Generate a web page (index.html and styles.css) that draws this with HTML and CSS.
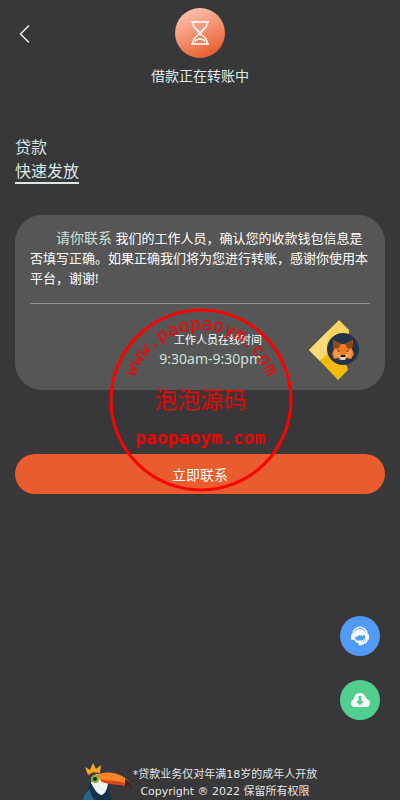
FILE: index.html
```html
<!DOCTYPE html>
<html lang="zh-CN">
<head>
    <meta charset="UTF-8">
    <meta name="viewport" content="width=device-width, initial-scale=1.0">
    <title>贷款</title>
    <link rel="stylesheet" href="styles.css">
</head>
<body>
    <header class="header">
        <button class="back-button" type="button" aria-label="返回">
            <svg width="12" height="20" viewBox="0 0 12 20"><path d="M10 1.500 1.500 10l8.500 8.500" fill="none" stroke="#eee" stroke-width="1.500"/></svg>
        </button>
        <div class="status-icon">
            <svg width="20" height="26" viewBox="0 0 20 26" fill="none" stroke="#fff" stroke-width="1.300">
                <path d="M1 2h18M1 24h18M3 2v2c0 5 6 6.500 6 9s-6 4-6 9v2M17 2v2c0 5-6 6.500-6 9s6 4 6 9v2"/>
                <path d="M5.500 7.500c2 3 3.500 3.500 4.500 5.500 1-2 2.500-2.500 4.500-5.500M10 14v2M5 22c1-4 9-4 10 0"/>
            </svg>
        </div>
        <p class="status-text">借款正在转账中</p>
    </header>

    <main class="content">
        <h1 class="title">贷款<br><span class="title-active">快速发放</span></h1>

        <section class="card">
            <p class="notice"><span class="notice-lead">请你联系</span> 我们的工作人员，确认您的收款钱包信息是否填写正确。如果正确我们将为您进行转账，感谢你使用本平台，谢谢!</p>
            <div class="service">
                <div class="service-time">
                    <p class="service-label">工作人员在线时间</p>
                    <p class="service-hours">9:30am-9:30pm</p>
                </div>
                <svg class="wallet-logo" width="50" height="60" viewBox="0 0 50 60">
                    <path d="M0 30 30 0l10 10v3L22 33 11 41z" fill="#f8d35e"/>
                    <path d="M0 30 20 10l-3 21-6 10z" fill="#fadb75"/>
                    <path d="m11 41 10-9 17 14 1 4-10 10z" fill="#f4b90b"/>
                    <circle cx="34" cy="29" r="16" fill="#23344a"/>
                    <path d="m24 20 8 4h4l8-4-1 9 2 5-3 5-5-1-2 2h-4l-2-2-4 1-2-5 2-5z" fill="#ef7b22"/>
                    <path d="m24 20 8 4-3 5-5-1zM44 20l-8 4 3 5 4-1z" fill="#944719"/>
                    <path d="m25 30 5 1 2 5-6 2zM43 30l-5 1-2 5 6 2z" fill="#f99b4c"/>
                    <path d="m28 30 3 1-1 1zM40 30l-3 1 1 1z" fill="#26323c"/>
                    <path d="m30 36 2-1h4l2 1-2 4h-4z" fill="#e5d9cd"/>
                    <path d="M32 35h4l1 2h-6z" fill="#222"/>
                </svg>
            </div>
        </section>

        <button class="contact-button" type="button">立即联系</button>
    </main>

    <footer class="footer">
        <svg class="toucan" width="50" height="37" viewBox="0 0 50 37">
            <path d="M0 37c0-5 3-9 6-12 1-9 5-13 11-14 7 1 9 7 9 14 0 6 0 8 5 12z" fill="#15304d"/>
            <path d="M0 37c1-6 4-9 7-11 0 5 2 8 5 11z" fill="#286386"/>
            <path d="M10 13c5-4 13-2 15 6 0 6-3 13-7 13-5-2-7-7-10-12z" fill="#eef4ee"/>
            <path d="M13 12c10-5 30-3 37 13-8-7-16-3-31-6z" fill="#f78523"/>
            <path d="M17 16c11 3 24 0 33 9-9-4-20-2-31-6z" fill="#d6461b"/>
            <path d="M42 16c4 2 7 5 8 10-3-2-5-3-8-3z" fill="#3c2429"/>
            <circle cx="12" cy="16" r="4" fill="#88ad35"/>
            <circle cx="12" cy="16" r="2" fill="#17232e"/>
            <path d="M5 12 2 4l5 3 3-7 3 6 5-4-1 8-6-1z" fill="#f7a928"/>
            <path d="m5 12 5-3 7 1" fill="none" stroke="#d67619"/>
        </svg>
        <div class="footer-text">
            <p>*贷款业务仅对年满18岁的成年人开放</p>
            <p>Copyright ® 2022 保留所有权限</p>
        </div>
    </footer>

    <div class="float-buttons">
        <button class="float-button service-button" type="button" aria-label="在线客服">
            <svg width="20" height="20" viewBox="0 0 20 20">
                <path d="M3 10V8c1-9 13-9 14 0v2" fill="none" stroke="#fff" stroke-width="1.500"/>
                <path d="M4 9c0-8 12-8 12 0v4c-2 6-10 6-12 0z" fill="#fff"/>
                <rect x="1" y="8" width="3" height="6" rx="1.500" fill="#fff"/>
                <rect x="16" y="8" width="3" height="6" rx="1.500" fill="#fff"/>
                <path d="M5 11c2 0 3-1 4-2 2 1 4 1 6 0v3c-1 5-8 6-10 0z" fill="#519bf6"/>
                <path d="M6 13c1 4 7 4 8 0-2 2-6 2-8 0z" fill="#fff"/>
                <path d="M17 13c0 4-3 5-7 5" fill="none" stroke="#fff" stroke-width="1.500"/>
                <circle cx="10" cy="18" r="1.500" fill="#fff"/>
            </svg>
        </button>
        <button class="float-button download-button" type="button" aria-label="下载">
            <svg width="20" height="16" viewBox="0 0 20 16">
                <path d="M5 15C2 15 1 13 1 11c0-2 1-3 3-4 0-4 3-6 6-6 3 0 5 2 6 5 2 1 4 3 4 5 0 3-2 4-4 4z" fill="#fff"/>
                <path d="M8.500 4h3v5H14l-4 4.500L6 9h2.500z" fill="#50cf8e"/>
            </svg>
        </button>
    </div>

    <svg class="stamp" width="186" height="184" viewBox="0 0 186 184">
        <defs>
            <path id="stampArc" d="M24 92a70 70 0 0 1 140 0"/>
        </defs>
        <circle cx="94" cy="92" r="90" fill="none" stroke="#f00" stroke-width="3"/>
        <text class="stamp-arc"><textPath href="#stampArc" startOffset="50%">www.paopaoym.com</textPath></text>
        <text class="stamp-name" x="94" y="100">泡泡源码</text>
        <text class="stamp-site" x="94" y="136">paopaoym.com</text>
    </svg>
</body>
</html>
```

FILE: styles.css
```css
* {
    box-sizing: border-box;
}

body {
    display: flex;
    flex-direction: column;
    min-height: 100vh;
    margin: 0;
    background-color: #38373a;
    color: #fff;
    font-family: "Noto Sans", "Noto Sans CJK SC", sans-serif;
}

p,
h1 {
    margin: 0;
}

button {
    padding: 0;
    border: none;
    color: #fff;
    font-family: inherit;
    cursor: pointer;
}

.header {
    position: relative;
    display: flex;
    flex-direction: column;
    align-items: center;
    gap: 8px;
    padding-top: 8px;
}

.back-button {
    position: absolute;
    top: 24px;
    left: 19px;
    height: 20px;
    background: none;
}

.back-button svg {
    display: block;
}

.status-icon {
    display: flex;
    align-items: center;
    justify-content: center;
    width: 50px;
    height: 50px;
    border-radius: 50%;
    background: linear-gradient(155deg, #ffc5b3 8%, #e85b2d 90%);
}

.status-text {
    color: #dfecea;
    font-size: 14px;
    line-height: 20px;
}

.content {
    padding: 49px 15px 30px;
}

/* Page title */
.title {
    color: #d9e8e5;
    font-size: 16px;
    font-weight: normal;
    line-height: 24px;
}

.title-active {
    display: inline-block;
    border-bottom: 2px solid #d9e8e5;
    line-height: 22px;
}

/* Notice card */
.card {
    margin-top: 31px;
    padding: 13px 15px 10px;
    border-radius: 27px;
    background-color: #565656;
}

.notice {
    padding-bottom: 15px;
    border-bottom: 1px solid #929292;
    font-size: 13px;
    line-height: 20px;
    text-indent: 2em;
}

.notice-lead {
    color: #d0e0dc;
    font-size: 14px;
}

.service {
    display: flex;
    align-items: center;
    justify-content: flex-end;
    gap: 47px;
    padding: 16px 11px 0 0;
}

.service-time {
    text-align: right;
}

.service-label {
    font-size: 11px;
    line-height: 18px;
}

.service-hours {
    color: #d0e0dc;
    font-size: 14px;
    line-height: 20px;
}

.contact-button {
    display: block;
    width: 100%;
    height: 40px;
    margin-top: 64px;
    border-radius: 20px;
    background-color: #e85c2d;
    font-size: 14px;
}

/* Footer */
.footer {
    display: flex;
    justify-content: center;
    align-items: flex-end;
    margin-top: auto;
    color: #e6e6e6;
    font-family: "DejaVu Sans", "Noto Sans CJK SC", sans-serif;
    font-size: 11px;
    line-height: 17px;
    text-align: center;
}

/* Floating buttons */
.float-buttons {
    position: fixed;
    right: 20px;
    bottom: 80px;
    display: flex;
    flex-direction: column;
    gap: 24px;
}

.float-button {
    display: flex;
    align-items: center;
    justify-content: center;
    width: 40px;
    height: 40px;
    border-radius: 50%;
}

.service-button {
    background-color: #519bf6;
}

.download-button {
    background-color: #50cf8e;
}

/* Round stamp over the page */
.stamp {
    position: fixed;
    top: 50%;
    left: 50%;
    transform: translate(-50%, -50%);
    pointer-events: none;
}

.stamp text {
    fill: #f00;
    text-anchor: middle;
}

.stamp-arc {
    font-family: "DejaVu Sans Mono", monospace;
    font-size: 18px;
}

.stamp-name {
    font-family: "Noto Sans CJK SC", sans-serif;
    font-size: 23px;
}

.stamp-site {
    font-family: "DejaVu Sans Mono", monospace;
    font-size: 18px;
    font-weight: bold;
}
```
